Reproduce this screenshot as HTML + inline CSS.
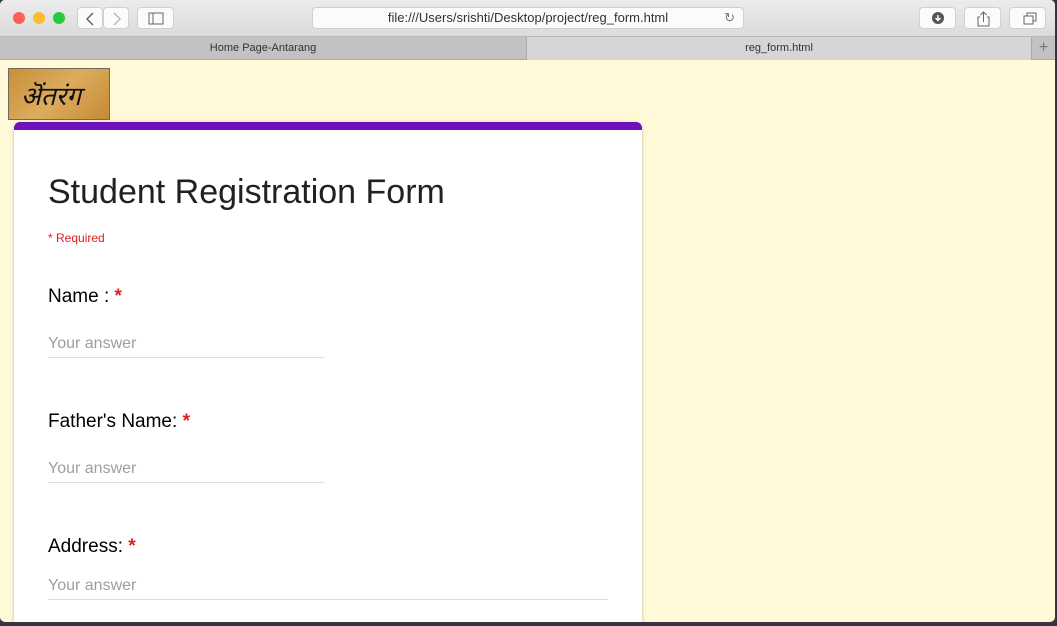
<!DOCTYPE html>
<html><head><style>
*{margin:0;padding:0;box-sizing:border-box}
body{width:1057px;height:626px;overflow:hidden;background:#3a3340;font-family:"Liberation Sans",sans-serif;position:relative}
.win{position:absolute;left:0;top:0;width:1055px;height:622px;background:#fff9d8;border-radius:5px;overflow:hidden}
.tb{position:absolute;left:0;top:0;width:100%;height:37px;background:linear-gradient(#ececec,#dcdbdc);border-bottom:1px solid #b8b8b8}
.dot{position:absolute;top:12px;width:12px;height:12px;border-radius:50%}
.btn{position:absolute;top:7px;height:22px;background:#fbfbfb;border:1px solid #d0d0d0;border-radius:4px}
.tabs{position:absolute;top:37px;left:0;width:100%;height:23px;background:#c2c1c3;border-bottom:1px solid #a9a9a9;font-size:11px;color:#333}
.card{position:absolute;left:14px;top:122px;width:628px;height:520px;background:#fff;border-radius:6px;box-shadow:0 1px 3px rgba(0,0,0,.25);border-top:8px solid #6f12b8}
.lbl{position:absolute;left:34px;font-size:19px;color:#000}
.star{color:#e0201c;font-weight:bold}
.ans{position:absolute;left:34px;font-size:16px;color:#9e9e9e;border-bottom:1px solid #dcdcdc;padding-bottom:4px}
</style></head><body>
<div class="win">
<div class="tb">
<div class="dot" style="left:13px;background:#fc5f57"></div>
<div class="dot" style="left:33px;background:#fdbc2e"></div>
<div class="dot" style="left:53px;background:#28c840"></div>
<div class="btn" style="left:77px;width:26px"><svg width="26" height="22"><path d="M15 5l-6 6 6 6" stroke="#666" stroke-width="1.5" fill="none"/></svg></div>
<div class="btn" style="left:103px;width:26px"><svg width="26" height="22"><path d="M10 5l6 6-6 6" stroke="#bbb" stroke-width="1.5" fill="none"/></svg></div>
<div class="btn" style="left:137px;width:37px"><svg width="37" height="22"><rect x="11" y="5" width="14" height="11" stroke="#666" fill="none"/><line x1="15" y1="5" x2="15" y2="16" stroke="#666"/></svg></div>
<div class="btn" style="left:312px;width:432px;font-size:13px;color:#333;text-align:center;line-height:20px">file:///Users/srishti/Desktop/project/reg_form.html<span style="position:absolute;right:8px;color:#777">↻</span></div>
<div class="btn" style="left:919px;width:37px"><svg width="37" height="22"><circle cx="18" cy="10" r="6" fill="#555"/><path d="M18 7v5M15.5 10l2.5 2.5 2.5-2.5" stroke="#fff" stroke-width="1.4" fill="none"/></svg></div>
<div class="btn" style="left:964px;width:37px"><svg width="37" height="22"><path d="M15 9h-2v9h11v-9h-2M18.5 14V4M15.5 7l3-3 3 3" stroke="#666" fill="none"/></svg></div>
<div class="btn" style="left:1009px;width:37px"><svg width="37" height="22"><rect x="14" y="8" width="9" height="8" stroke="#666" fill="none"/><path d="M17 8V5h9v8h-3" stroke="#666" fill="none"/></svg></div>
</div>
<div class="tabs">
<div style="position:absolute;left:0;width:526px;text-align:center;line-height:22px">Home Page-Antarang</div>
<div style="position:absolute;left:526px;width:505px;height:23px;background:#d6d5d7;border-left:1px solid #aaa;text-align:center;line-height:22px">reg_form.html</div>
<div style="position:absolute;left:1031px;width:24px;height:23px;border-left:1px solid #aaa;text-align:center;line-height:22px;font-size:16px;color:#777">+</div>
</div>
<div style="position:absolute;left:8px;top:68px;width:102px;height:52px;border:1px solid #6f6a5e;background:linear-gradient(135deg,#c98f3a,#dcac5e 50%,#c58a34)">
<span style="position:absolute;left:12px;top:8px;font-family:'Liberation Serif',serif;font-size:26px;font-style:italic;color:#111">ऄंतरंग</span></div>
<div class="card">
<div style="position:absolute;left:34px;top:43px;font-size:34px;color:#202124">Student Registration Form</div>
<div style="position:absolute;left:34px;top:101px;font-size:12px;color:#e0201c">* Required</div>
<div class="lbl" style="top:156px">Name : <span class="star">*</span></div>
<div class="ans" style="top:205px;width:276px">Your answer</div>
<div class="lbl" style="top:281px">Father's Name: <span class="star">*</span></div>
<div class="ans" style="top:330px;width:276px">Your answer</div>
<div class="lbl" style="top:406px">Address: <span class="star">*</span></div>
<div class="ans" style="top:447px;width:560px">Your answer</div>
</div>
</div>
</body></html>
